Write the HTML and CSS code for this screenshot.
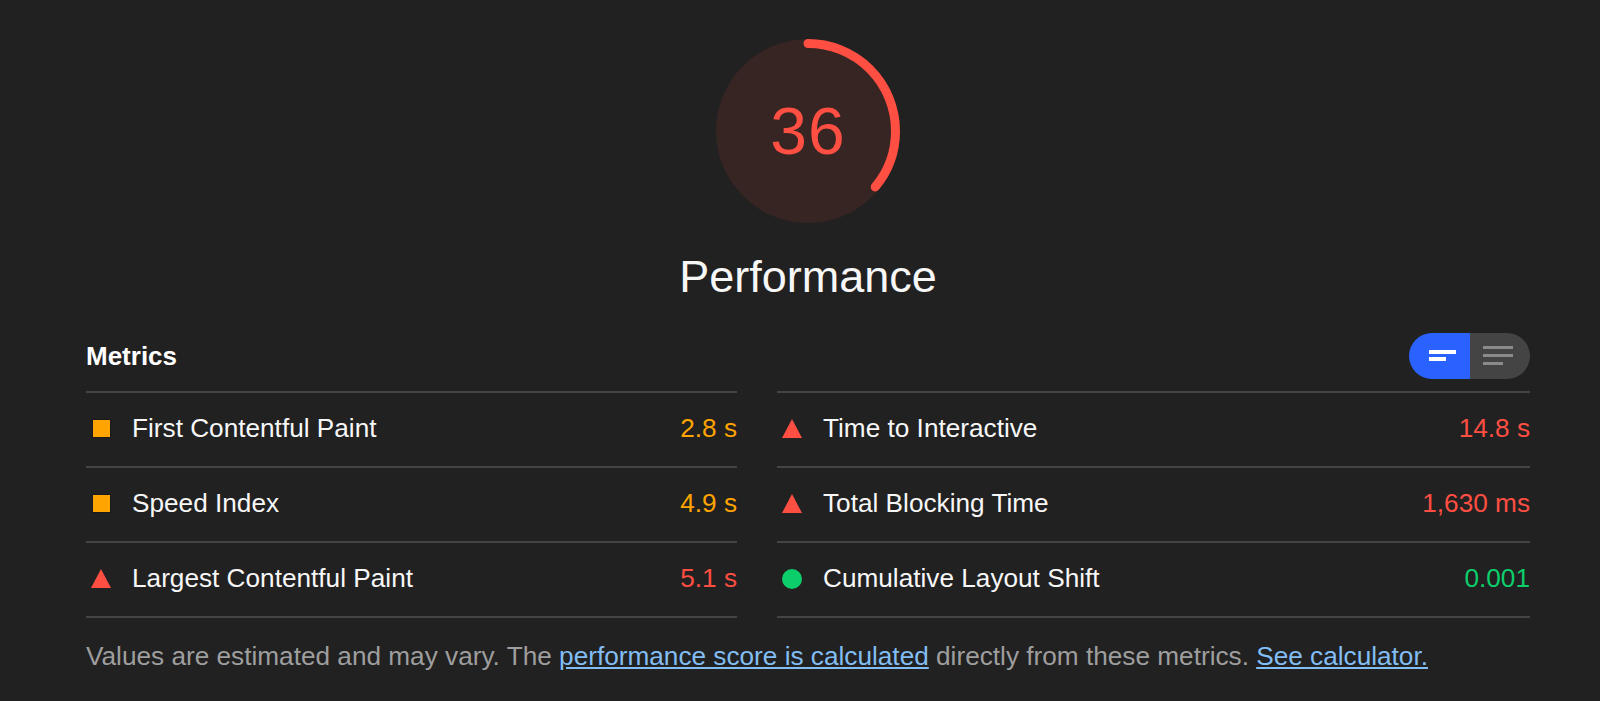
FILE: index.html
```html
<!DOCTYPE html>
<html lang="en">
<head>
<meta charset="utf-8">
<title>Performance</title>
<link rel="stylesheet" href="styles.css">
</head>
<body>
<div class="page">
  <div class="gauge-wrap">
    <div class="gauge">
      <svg class="gauge-svg" width="184" height="184" viewBox="0 0 184 184">
        <circle cx="92" cy="92" r="92" fill="#372524"/>
        <circle cx="92" cy="92" r="87.5" fill="none" stroke="#ff4e42" stroke-width="9" stroke-linecap="round" stroke-dasharray="197.9 600" transform="rotate(-90 92 92)"/>
      </svg>
      <div class="gauge-score">36</div>
    </div>
    <div class="gauge-label">Performance</div>
  </div>

  <div class="metrics-header">
    <div class="metrics-title">Metrics</div>
    <div class="toggle">
      <div class="toggle-btn active">
        <svg width="28" height="12" viewBox="0 0 28 12"><rect x="0" y="0" width="27" height="4" fill="#fff"/><rect x="0" y="7" width="17" height="4" fill="#fff"/></svg>
      </div>
      <div class="toggle-btn">
        <svg width="30" height="20" viewBox="0 0 30 20"><rect x="0" y="0" width="30" height="3" fill="#8a8a8a"/><rect x="0" y="8" width="30" height="3" fill="#8a8a8a"/><rect x="0" y="16" width="20" height="3" fill="#8a8a8a"/></svg>
      </div>
    </div>
  </div>

  <div class="metrics-grid">
    <div class="metrics-col">
      <div class="metric">
        <span class="icon"><span class="sq"></span></span>
        <span class="metric-name">First Contentful Paint</span>
        <span class="metric-value avg">2.8&nbsp;s</span>
      </div>
      <div class="metric">
        <span class="icon"><span class="sq"></span></span>
        <span class="metric-name">Speed Index</span>
        <span class="metric-value avg">4.9&nbsp;s</span>
      </div>
      <div class="metric">
        <span class="icon"><span class="tri"></span></span>
        <span class="metric-name">Largest Contentful Paint</span>
        <span class="metric-value fail">5.1&nbsp;s</span>
      </div>
    </div>
    <div class="metrics-col">
      <div class="metric">
        <span class="icon"><span class="tri"></span></span>
        <span class="metric-name">Time to Interactive</span>
        <span class="metric-value fail">14.8&nbsp;s</span>
      </div>
      <div class="metric">
        <span class="icon"><span class="tri"></span></span>
        <span class="metric-name">Total Blocking Time</span>
        <span class="metric-value fail">1,630&nbsp;ms</span>
      </div>
      <div class="metric">
        <span class="icon"><span class="dot"></span></span>
        <span class="metric-name">Cumulative Layout Shift</span>
        <span class="metric-value pass">0.001</span>
      </div>
    </div>
  </div>

  <p class="footnote">Values are estimated and may vary. The <a href="#">performance score is calculated</a> directly from these metrics. <a href="#">See calculator.</a></p>
</div>
</body>
</html>
```

FILE: styles.css
```css
html, body {
  margin: 0;
  padding: 0;
  background: #212121;
}
body {
  font-family: "Liberation Sans", Arial, sans-serif;
  color: #f5f5f5;
  height: 701px;
  overflow: hidden;
}
.page {
  width: 1444px;
  margin-left: 86px;
  padding-top: 39px;
}
.gauge-wrap {
  display: flex;
  flex-direction: column;
  align-items: center;
}
.gauge {
  display: grid;
  width: 184px;
  height: 184px;
}
.gauge-svg, .gauge-score {
  grid-area: 1 / 1;
}
.gauge-svg {
  display: block;
}
.gauge-score {
  align-self: center;
  justify-self: center;
  font-size: 66px;
  line-height: 1;
  color: #ff4e42;
  letter-spacing: 1px;
}
.gauge-label {
  margin-top: 28px;
  font-size: 45px;
  color: #f7f7f7;
}
.metrics-header {
  margin-top: 30px;
  height: 46px;
  display: flex;
  align-items: center;
  justify-content: space-between;
}
.metrics-title {
  font-size: 26px;
  font-weight: bold;
  color: #fff;
}
.toggle {
  display: flex;
  width: 121px;
  height: 46px;
  border-radius: 23px;
  overflow: hidden;
}
.toggle-btn {
  flex: 0 0 60px;
  display: flex;
  align-items: center;
  justify-content: flex-start;
  box-sizing: border-box;
  background: #444444;
  padding-left: 13px;
}
.toggle-btn.active {
  flex: 0 0 61px;
  background: #2962ff;
  padding-left: 20px;
}
.toggle-btn svg {
  display: block;
}
.metrics-grid {
  margin-top: 12px;
  display: grid;
  grid-template-columns: 651px 753px;
  column-gap: 40px;
}
.metrics-col {
  display: flex;
  flex-direction: column;
  border-bottom: 2px solid #444444;
}
.metric {
  height: 75px;
  box-sizing: border-box;
  border-top: 2px solid #444444;
  display: flex;
  align-items: center;
  font-size: 26.2px;
  padding-bottom: 2px;
}
.icon {
  width: 20px;
  height: 20px;
  margin-left: 5px;
  margin-right: 21px;
  display: flex;
  align-items: center;
  justify-content: center;
  flex: 0 0 auto;
}
.sq {
  width: 17px;
  height: 17px;
  background: #ffa400;
  border: 1px solid #1a1a1a;
}
.tri {
  width: 0;
  height: 0;
  border-left: 10px solid transparent;
  border-right: 10px solid transparent;
  border-bottom: 19px solid #ff4e42;
}
.dot {
  width: 20px;
  height: 20px;
  border-radius: 50%;
  background: #0cce6b;
}
.metric-name {
  flex: 1 1 auto;
  color: #f7f7f7;
}
.metric-value {
  flex: 0 0 auto;
}
.avg { color: #ffa400; }
.fail { color: #ff4e42; }
.pass { color: #0cce6b; }
.footnote {
  margin: 23px 0 0 0;
  font-size: 26.2px;
  color: #9e9e9e;
  white-space: nowrap;
}
.footnote a {
  color: #82bdf3;
  text-decoration: underline;
}
```
